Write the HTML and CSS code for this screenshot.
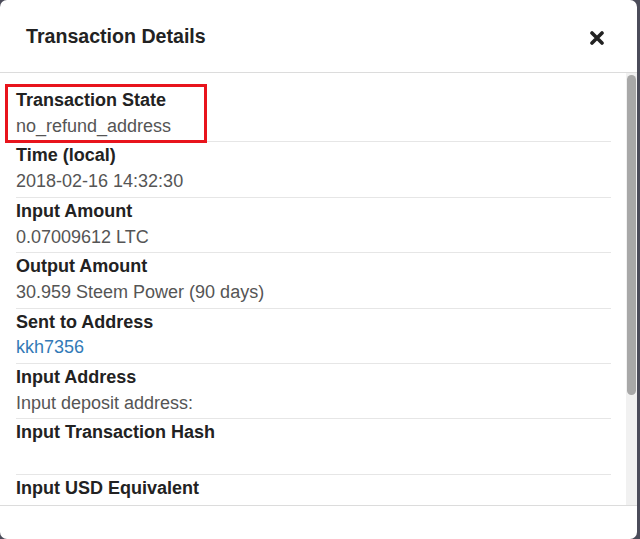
FILE: index.html
```html
<!DOCTYPE html>
<html>
<head>
<meta charset="utf-8">
<link rel="stylesheet" href="styles.css">
</head>
<body>
<div class="modal">
  <div class="modal-header">
    <h4 class="modal-title">Transaction Details</h4>
    <button class="close" aria-label="Close">
      <svg width="14" height="14" viewBox="0 0 14 14"><path d="M2 2 L12 12 M12 2 L2 12" stroke="#222" stroke-width="3.6" stroke-linecap="round"/></svg>
    </button>
  </div>
  <div class="modal-body">
    <div class="rows">
      <div class="row"><div class="label">Transaction State</div><div class="value">no_refund_address</div></div>
      <div class="row"><div class="label">Time (local)</div><div class="value">2018-02-16 14:32:30</div></div>
      <div class="row"><div class="label">Input Amount</div><div class="value">0.07009612 LTC</div></div>
      <div class="row"><div class="label">Output Amount</div><div class="value">30.959 Steem Power (90 days)</div></div>
      <div class="row"><div class="label">Sent to Address</div><div class="value"><a class="link" href="#">kkh7356</a></div></div>
      <div class="row"><div class="label">Input Address</div><div class="value">Input deposit address:</div></div>
      <div class="row"><div class="label">Input Transaction Hash</div><div class="value">&nbsp;</div></div>
      <div class="row last"><div class="label">Input USD Equivalent</div></div>
    </div>
    <div class="scrollbar"><div class="thumb"></div></div>
  </div>
  <div class="modal-footer"></div>
  <div class="highlight"></div>
</div>
</body>
</html>
```
FILE: styles.css
```css
html, body {
  margin: 0;
  padding: 0;
  height: 100%;
  background: #4b4c5a;
  overflow: hidden;
}
body {
  font-family: "Liberation Sans", Arial, sans-serif;
}
.modal {
  position: relative;
  width: 637px;
  height: 539px;
  background: #fff;
  border-radius: 7px;
  overflow: hidden;
  display: flex;
  flex-direction: column;
}
.modal-header {
  height: 73px;
  flex: none;
  box-sizing: border-box;
  border-bottom: 1px solid #dcdcdc;
  display: flex;
  align-items: center;
  justify-content: space-between;
  padding: 0 33px 0 26px;
}
.modal-title {
  margin: 0;
  font-size: 19.6px;
  font-weight: bold;
  color: #222;
  line-height: 1;
  position: relative;
  top: 1px;
}
.close {
  border: 0;
  background: none;
  padding: 0;
  margin: 0;
  width: 14px;
  height: 14px;
  display: block;
  position: relative;
  top: 2px;
}
.close svg { display: block; }
.modal-body {
  flex: 1;
  position: relative;
  overflow: hidden;
  display: flex;
}
.rows {
  flex: 1;
  padding: 14px 15px 0 16px;
  overflow: hidden;
}
.scrollbar {
  width: 11px;
  flex: none;
  background: #f1f1f1;
  padding: 2px 1px 0;
  box-sizing: border-box;
}
.thumb {
  height: 320px;
  background: #a8a8a8;
  border-radius: 5px;
}
.row {
  padding: 1px 0 2px;
  border-bottom: 1px solid #e6e6e6;
}
.row.last {
  border-bottom: 0;
}
.label {
  font-size: 18px;
  line-height: 25.7px;
  font-weight: bold;
  color: #222;
}
.value {
  font-size: 18px;
  line-height: 25.7px;
  color: #555;
}
.link {
  color: #337ab7;
  text-decoration: none;
}
.modal-footer {
  height: 33px;
  flex: none;
  border-top: 1px solid #dcdcdc;
}
.highlight {
  position: absolute;
  left: 5px;
  top: 84px;
  width: 196px;
  height: 53px;
  border: 3px solid #e8141c;
  pointer-events: none;
}
```
